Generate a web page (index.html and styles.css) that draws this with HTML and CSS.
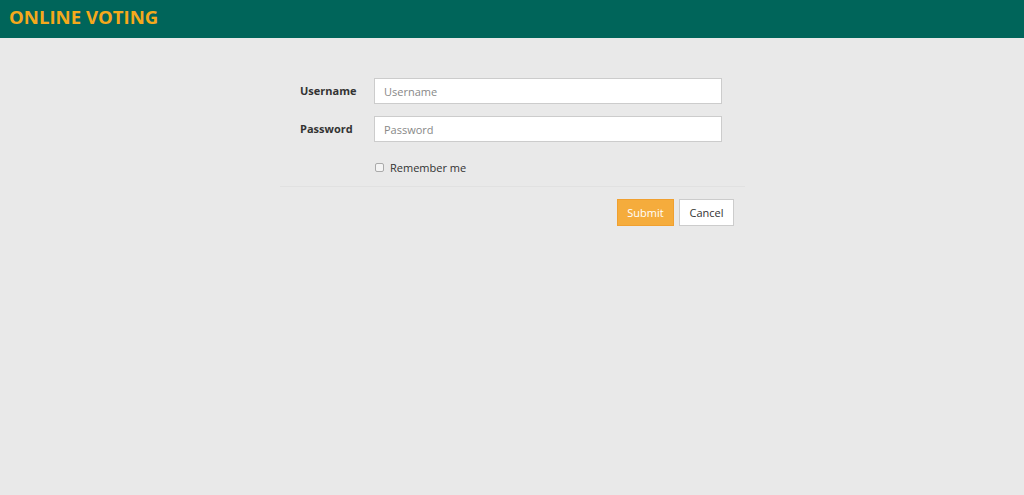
FILE: index.html
```html
<!DOCTYPE html>
<html>
<head>
<meta charset="utf-8">
<link rel="stylesheet" href="styles.css">
</head>
<body>
<header class="topbar"><span class="brand">ONLINE VOTING</span></header>
<main class="page">
  <form class="login">
    <div class="row">
      <label class="lbl">Username</label>
      <input class="field" type="text" placeholder="Username">
    </div>
    <div class="row">
      <label class="lbl">Password</label>
      <input class="field" type="password" placeholder="Password">
    </div>
    <div class="row check-row">
      <span class="lbl"></span>
      <label class="remember"><span class="box"></span>Remember me</label>
    </div>
    <div class="actions">
      <button type="button" class="btn submit">Submit</button>
      <button type="button" class="btn cancel">Cancel</button>
    </div>
  </form>
</main>
</body>
</html>
```
FILE: styles.css
```css
* { box-sizing: border-box; }
html, body { margin: 0; padding: 0; }
body {
  background: #e9e9e9;
  font-family: "Open Sans", "Liberation Sans", sans-serif;
  color: #333;
  height: 495px;
  overflow: hidden;
}
.topbar {
  height: 38px;
  background: #00655a;
  display: flex;
  align-items: center;
  padding-left: 9px;
  padding-bottom: 5px;
}
.brand {
  color: #f5a91c;
  font-weight: 700;
  font-size: 18.6px;
}
.page {
  display: flex;
  justify-content: center;
  padding-top: 40px;
  padding-left: 1px;
}
.login {
  width: 465px;
}
.row {
  display: flex;
  align-items: center;
  margin-bottom: 12px;
}
.lbl {
  width: 94px;
  padding-left: 20px;
  padding-bottom: 2px;
  font-size: 11px;
  font-weight: 700;
  color: #333;
}
.field {
  width: 348px;
  height: 26px;
  border: 1px solid #ccc;
  background: #fff;
  padding: 0 9px;
  font-family: inherit;
  font-size: 11px;
  color: #555;
  outline: none;
}
.field::placeholder { color: #888; }
.check-row {
  margin-top: 17px;
  margin-bottom: 0;
  height: 17px;
}
.remember {
  display: flex;
  align-items: center;
  font-size: 11px;
  color: #333;
}
.box {
  width: 9px;
  height: 9px;
  border: 1px solid #aaa;
  border-radius: 2px;
  background: #f4f4f4;
  margin: 0 6px 0 1px;
}
.actions {
  border-top: 1px solid #e1e1e1;
  margin-top: 10px;
  padding-top: 12px;
  padding-right: 11px;
  display: flex;
  justify-content: flex-end;
  gap: 5px;
}
.btn {
  height: 27px;
  font-family: inherit;
  font-size: 11px;
  padding: 0;
  border: 1px solid #ccc;
  border-radius: 0;
}
.submit {
  width: 57px;
  background: #f5ac3c;
  border-color: #f0a030;
  color: #fff;
}
.cancel {
  width: 55px;
  background: #fff;
  color: #333;
}
```
